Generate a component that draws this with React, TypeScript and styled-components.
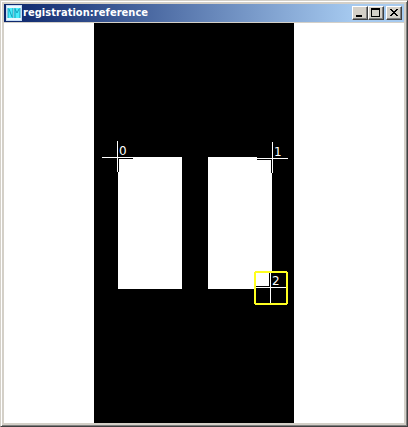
import React from "react";
import styled, { createGlobalStyle } from "styled-components";

const GlobalStyle = createGlobalStyle`
  * { box-sizing: border-box; }
  body { margin: 0; overflow: hidden; }
`;

const WindowFrame = styled.div`
  width: 408px;
  height: 427px;
  display: flex;
  flex-direction: column;
  padding: 3px;
  background: #d4d0c8;
  border: 1px solid #d4d0c8;
  border-right-color: #404040;
  border-bottom-color: #404040;
  box-shadow: inset 1px 1px #fff, inset -1px -1px #808080;
`;

const TitleBar = styled.div`
  flex: none;
  height: 18px;
  display: flex;
  align-items: center;
  padding: 0 2px;
  background: linear-gradient(to right, #0a246a, #a6caf0 350px);
`;

const Title = styled.div`
  flex: 1;
  margin-left: 1px;
  color: #fff;
  font: bold 11px/18px "DejaVu Sans Condensed", "DejaVu Sans", sans-serif;
  font-stretch: condensed;
  letter-spacing: 0.05px;
  white-space: nowrap;
`;

const CaptionButton = styled.button<{ $gap?: number }>`
  width: 16px;
  height: 14px;
  padding: 0;
  margin-left: ${(p) => p.$gap ?? 0}px;
  border: 1px solid;
  border-color: #fff #404040 #404040 #fff;
  box-shadow: inset -1px -1px #808080;
  background: #d4d0c8;
  svg { display: block; }
`;

const ClientArea = styled.div`
  flex: none;
  height: 400px;
  margin-top: 1px;
  display: flex;
  padding-left: 90px;
  background: #fff;
`;

const ImageCanvas = styled.div`
  position: relative;
  width: 200px;
  height: 400px;
  display: flex;
  gap: 26px;
  padding: 134px 0 0 24px;
  background: #000;
`;

const Block = styled.div`
  width: 64px;
  height: 132px;
  background: #fff;
`;

const Marker = styled.div<{ $x: number; $y: number }>`
  position: absolute;
  left: ${(p) => p.$x - 17}px;
  top: ${(p) => p.$y - 17}px;
  width: 36px;
  height: 36px;
  svg { display: block; }
`;

const Label = styled.span`
  position: absolute;
  left: 19px;
  top: 4px;
  color: #fff;
  font: 12px/14px "DejaVu Sans", sans-serif;
`;

const markers = [
  { x: 23, y: 134, label: "0", selected: false },
  { x: 178, y: 135, label: "1", selected: false },
  { x: 176, y: 264, label: "2", selected: true },
];

function Crosshair() {
  return (
    <svg width="36" height="36" shapeRendering="crispEdges">
      <path d="M2 16h31v3H2zM16 1h3v31h-3z" fill="#000" />
      <path d="M2 17h31v1H2zM17 1h1v31h-1z" fill="#fff" />
    </svg>
  );
}

function SelectedCrosshair() {
  return (
    <svg width="36" height="36" shapeRendering="crispEdges">
      <path d="M2 16h31v3H2zM16 2h3v31h-3z" fill="#000" />
      <path d="M2 17h31v1H2zM17 2h1v31h-1z" fill="#fff" />
      <path d="M2 1h32v1h1v32h-1v1H2v-1H1V2h1zM3 3v30h30V3z" fill="#ffff20" fillRule="evenodd" />
    </svg>
  );
}

function AppIcon() {
  return (
    <svg width="16" height="16" shapeRendering="crispEdges">
      <path d="M0 0h16v16H0z" fill="#c4dcf6" />
      <path d="M1 1h14v14H1z" fill="#eaf8ff" />
      <path d="M2 3h5v10H2z" fill="#48edfa" />
      <path d="M8 3h6v10H8z" fill="#48edfa" />
      <path d="M2 3v10M3 4l3 8M7 3v10M9 3v10M9 4l2 4l2-4M14 3v10" fill="none" stroke="#159fbd" shapeRendering="auto" />
    </svg>
  );
}

export default function App() {
  return (
    <>
      <GlobalStyle />
      <WindowFrame>
        <TitleBar>
          <AppIcon />
          <Title>registration:reference</Title>
          <CaptionButton aria-label="Minimize">
            <svg width="14" height="12" shapeRendering="crispEdges"><path d="M3 8h6v2H3z" /></svg>
          </CaptionButton>
          <CaptionButton aria-label="Maximize">
            <svg width="14" height="12" shapeRendering="crispEdges">
              <path d="M2 1h9v9H2zM3 3v6h7V3z" fillRule="evenodd" />
            </svg>
          </CaptionButton>
          <CaptionButton aria-label="Close" $gap={2}>
            <svg width="14" height="12" shapeRendering="crispEdges">
              <path d="M3 2h2v1h1v1h2V3h1V2h2v1h-1v1H9v1H8v1h1v1h1v1h1v1H9V8H8V7H6v1H5v1H3V8h1V7h1V6h1V5H5V4H4V3H3z" />
            </svg>
          </CaptionButton>
        </TitleBar>
        <ClientArea>
          <ImageCanvas>
            <Block />
            <Block />
            {markers.map((m) => (
              <Marker key={m.label} $x={m.x} $y={m.y}>
                {m.selected ? <SelectedCrosshair /> : <Crosshair />}
                <Label>{m.label}</Label>
              </Marker>
            ))}
          </ImageCanvas>
        </ClientArea>
      </WindowFrame>
    </>
  );
}
